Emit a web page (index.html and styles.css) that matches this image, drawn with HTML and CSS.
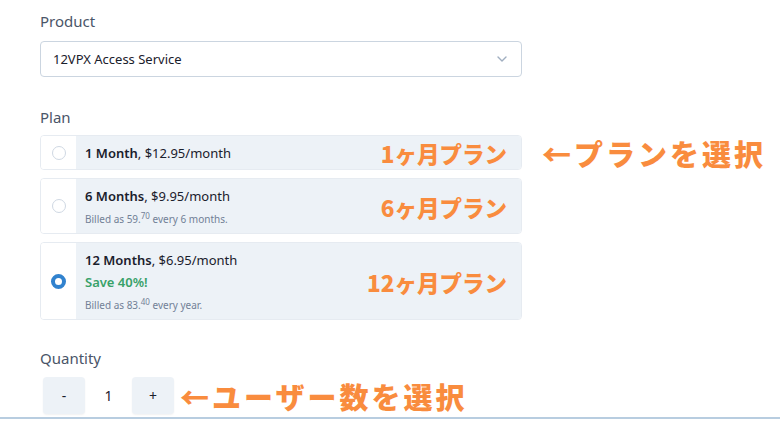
FILE: index.html
```html
<!DOCTYPE html>
<html lang="ja">
<head>
<meta charset="utf-8">
<link rel="stylesheet" href="styles.css">
</head>
<body>
<div class="page">
  <div class="field-label">Product</div>
  <div class="select">
    <span>12VPX Access Service</span>
    <svg class="chev" width="12" height="8" viewBox="0 0 12 8"><path d="M2 2 L6 6 L10 2" fill="none" stroke="#a0aec0" stroke-width="1.4" stroke-linecap="round" stroke-linejoin="round"/></svg>
  </div>

  <div class="field-label plan-label">Plan</div>
  <div class="plans">
    <div class="plan-line">
      <div class="plan">
        <div class="radio-cell"><span class="radio"></span></div>
        <div class="plan-body">
          <div class="plan-text">
            <div class="title"><b>1 Month</b>, $12.95/month</div>
          </div>
          <div class="note">1ヶ月プラン</div>
        </div>
      </div>
      <div class="callout">←プランを選択</div>
    </div>
    <div class="plan-line">
      <div class="plan">
        <div class="radio-cell"><span class="radio"></span></div>
        <div class="plan-body">
          <div class="plan-text">
            <div class="title"><b>6 Months</b>, $9.95/month</div>
            <div class="billed">Billed as 59.<sup>70</sup> every 6 months.</div>
          </div>
          <div class="note">6ヶ月プラン</div>
        </div>
      </div>
    </div>
    <div class="plan-line">
      <div class="plan">
        <div class="radio-cell"><span class="radio checked"></span></div>
        <div class="plan-body">
          <div class="plan-text">
            <div class="title"><b>12 Months</b>, $6.95/month</div>
            <div class="save">Save 40%!</div>
            <div class="billed">Billed as 83.<sup>40</sup> every year.</div>
          </div>
          <div class="note">12ヶ月プラン</div>
        </div>
      </div>
    </div>
  </div>

  <div class="field-label qty-label">Quantity</div>
  <div class="qty-line">
    <div class="qty">
      <div class="btn">-</div>
      <div class="count">1</div>
      <div class="btn">+</div>
    </div>
    <div class="callout qty-callout">←ユーザー数を選択</div>
  </div>
</div>
<div class="rule"></div>
</body>
</html>
```

FILE: styles.css
```css
html, body {
  margin: 0;
  padding: 0;
  background: #ffffff;
}
body {
  font-family: "Noto Sans", "Open Sans", sans-serif;
  color: #1a202c;
  width: 780px;
  height: 439px;
  overflow: hidden;
}
.page {
  padding: 11px 0 0 40px;
}
.field-label {
  font-size: 15px;
  line-height: 20px;
  color: #4a5568;
  margin-bottom: 10px;
}
.select {
  width: 482px;
  height: 36px;
  box-sizing: border-box;
  border: 1px solid #cbd5e0;
  border-radius: 4px;
  display: flex;
  align-items: center;
  justify-content: space-between;
  padding: 0 13px 0 12px;
  font-size: 13px;
  color: #1a202c;
}
.plan-label {
  margin-top: 30px;
  margin-bottom: 8px;
}
.plans {
  display: flex;
  flex-direction: column;
  gap: 8px;
}
.plan-line {
  display: flex;
  align-items: center;
  gap: 20px;
}
.plan {
  width: 482px;
  display: flex;
  box-sizing: border-box;
  border: 1px solid #e6ebf1;
  border-radius: 4px;
  overflow: hidden;
}
.radio-cell {
  width: 35px;
  flex: none;
  background: #ffffff;
  display: flex;
  align-items: center;
  justify-content: center;
}
.radio {
  width: 12px;
  height: 12px;
  border: 1.5px solid #cfd8e3;
  border-radius: 50%;
  background: #fff;
}
.radio.checked {
  width: 7px;
  height: 7px;
  border: 4px solid #3182ce;
  background: #ffffff;
}
.plan-body {
  flex: 1;
  background: #edf2f7;
  display: flex;
  align-items: center;
  justify-content: space-between;
  padding: 7px 14px 6px 9px;
}
.title {
  font-size: 13px;
  line-height: 20px;
  color: #1a202c;
}
.title b {
  font-weight: 600;
}
.save {
  font-size: 13px;
  line-height: 20px;
  color: #38a169;
  font-weight: 600;
  margin-top: 2px;
}
.billed {
  font-size: 10px;
  line-height: 16px;
  color: #718096;
  margin-top: 5px;
}
.billed sup {
  font-size: 8px;
  line-height: 0;
  vertical-align: 4px;
}
.note, .callout {
  font-family: "Noto Sans CJK JP", sans-serif;
  font-weight: 900;
  color: #f98c3e;
}
.note {
  font-size: 22.5px;
  line-height: 20px;
  height: 20px;
}
.callout {
  font-size: 29px;
  line-height: 30px;
  letter-spacing: 3px;
}
.qty-label {
  margin-top: 28px;
  margin-bottom: 9px;
}
.qty-line {
  display: flex;
  align-items: center;
  gap: 6px;
}
.qty {
  display: flex;
  align-items: center;
  padding-left: 3px;
}
.btn {
  width: 42px;
  height: 37px;
  background: #edf2f7;
  border-radius: 4px;
  box-shadow: 0 1px 2px rgba(0,0,0,0.06);
  display: flex;
  align-items: center;
  justify-content: center;
  font-size: 14px;
  color: #1a202c;
}
.count {
  width: 47px;
  text-align: center;
  font-size: 14px;
}
.rule {
  height: 2px;
  background: #b8cde0;
  margin-top: 3px;
}
```
